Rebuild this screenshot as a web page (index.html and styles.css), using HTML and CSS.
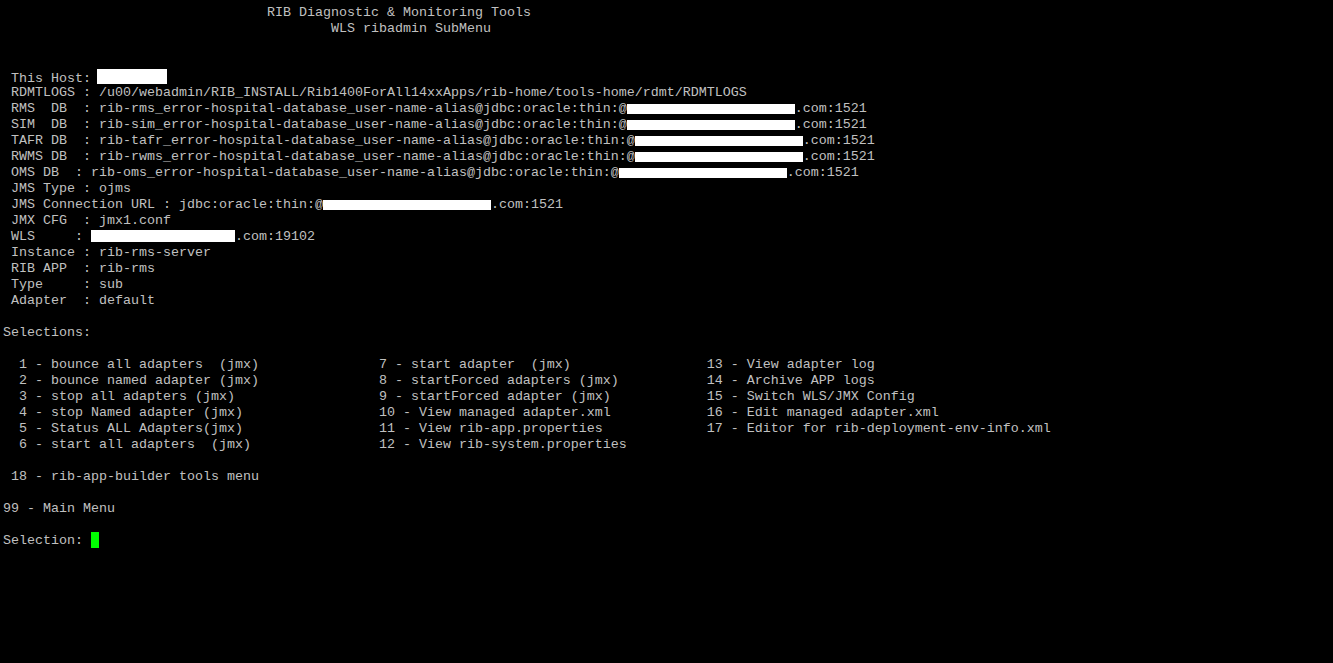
FILE: index.html
```html
<!DOCTYPE html>
<html lang="en">
<head>
  <meta charset="UTF-8">
  <meta name="viewport" content="width=device-width, initial-scale=1.0">
  <title>RIB Diagnostic &amp; Monitoring Tools</title>
  <link rel="stylesheet" href="styles.css">
</head>
<body>
  <div class="terminal">
    <!-- Header -->
    <div class="line">                                 RIB Diagnostic &amp; Monitoring Tools</div>
    <div class="line">                                         WLS ribadmin SubMenu</div>
    <div class="line"></div>
    <div class="line"></div>

    <!-- Environment info -->
    <div class="line"> This Host: <span class="mask mask-host"></span></div>
    <div class="line"> RDMTLOGS : /u00/webadmin/RIB_INSTALL/Rib1400ForAll14xxApps/rib-home/tools-home/rdmt/RDMTLOGS</div>
    <div class="line"> RMS  DB  : rib-rms_error-hospital-database_user-name-alias@jdbc:oracle:thin:@<span class="mask mask-db"></span>.com:1521</div>
    <div class="line"> SIM  DB  : rib-sim_error-hospital-database_user-name-alias@jdbc:oracle:thin:@<span class="mask mask-db"></span>.com:1521</div>
    <div class="line"> TAFR DB  : rib-tafr_error-hospital-database_user-name-alias@jdbc:oracle:thin:@<span class="mask mask-db"></span>.com:1521</div>
    <div class="line"> RWMS DB  : rib-rwms_error-hospital-database_user-name-alias@jdbc:oracle:thin:@<span class="mask mask-db"></span>.com:1521</div>
    <div class="line"> OMS DB  : rib-oms_error-hospital-database_user-name-alias@jdbc:oracle:thin:@<span class="mask mask-db"></span>.com:1521</div>
    <div class="line"> JMS Type : ojms</div>
    <div class="line"> JMS Connection URL : jdbc:oracle:thin:@<span class="mask mask-db"></span>.com:1521</div>
    <div class="line"> JMX CFG  : jmx1.conf</div>
    <div class="line"> WLS     : <span class="mask mask-wls"></span>.com:19102</div>
    <div class="line"> Instance : rib-rms-server</div>
    <div class="line"> RIB APP  : rib-rms</div>
    <div class="line"> Type     : sub</div>
    <div class="line"> Adapter  : default</div>
    <div class="line"></div>

    <!-- Menu -->
    <div class="line">Selections:</div>
    <div class="line"></div>
    <div class="menu">
      <span>  1 - bounce all adapters  (jmx)</span><span>7 - start adapter  (jmx)</span><span>13 - View adapter log</span>
      <span>  2 - bounce named adapter (jmx)</span><span>8 - startForced adapters (jmx)</span><span>14 - Archive APP logs</span>
      <span>  3 - stop all adapters (jmx)</span><span>9 - startForced adapter (jmx)</span><span>15 - Switch WLS/JMX Config</span>
      <span>  4 - stop Named adapter (jmx)</span><span>10 - View managed adapter.xml</span><span>16 - Edit managed adapter.xml</span>
      <span>  5 - Status ALL Adapters(jmx)</span><span>11 - View rib-app.properties</span><span>17 - Editor for rib-deployment-env-info.xml</span>
      <span>  6 - start all adapters  (jmx)</span><span>12 - View rib-system.properties</span><span></span>
    </div>
    <div class="line"></div>
    <div class="line"> 18 - rib-app-builder tools menu</div>
    <div class="line"></div>
    <div class="line">99 - Main Menu</div>
    <div class="line"></div>
    <div class="line">Selection: <span class="cursor"></span></div>
  </div>
</body>
</html>
```

FILE: styles.css
```css
html, body {
  margin: 0;
  height: 100%;
  background-color: #000;
}

.terminal {
  padding: 5px 0 0 3px;
  color: #c0c0c0;
  font-family: "Liberation Mono", "Courier New", monospace;
  font-size: 13.333px;
  line-height: 16px;
}

.line {
  height: 16px;
  white-space: pre;
}

.menu {
  display: grid;
  grid-template-columns: 47ch 41ch auto;
  grid-auto-rows: 16px;
  white-space: pre;
}

.mask {
  display: inline-block;
  background-color: #fff;
}

.mask-host {
  width: 70px;
  height: 15px;
  margin-left: -2px;
  vertical-align: -2px;
}

.mask-db {
  width: 21ch;
  height: 10px;
  vertical-align: -2px;
}

.mask-wls {
  width: 18ch;
  height: 12px;
  vertical-align: -2px;
}

.cursor {
  display: inline-block;
  width: 1ch;
  height: 16px;
  margin-top: -1px;
  vertical-align: top;
  background-color: #00ff00;
}
```
